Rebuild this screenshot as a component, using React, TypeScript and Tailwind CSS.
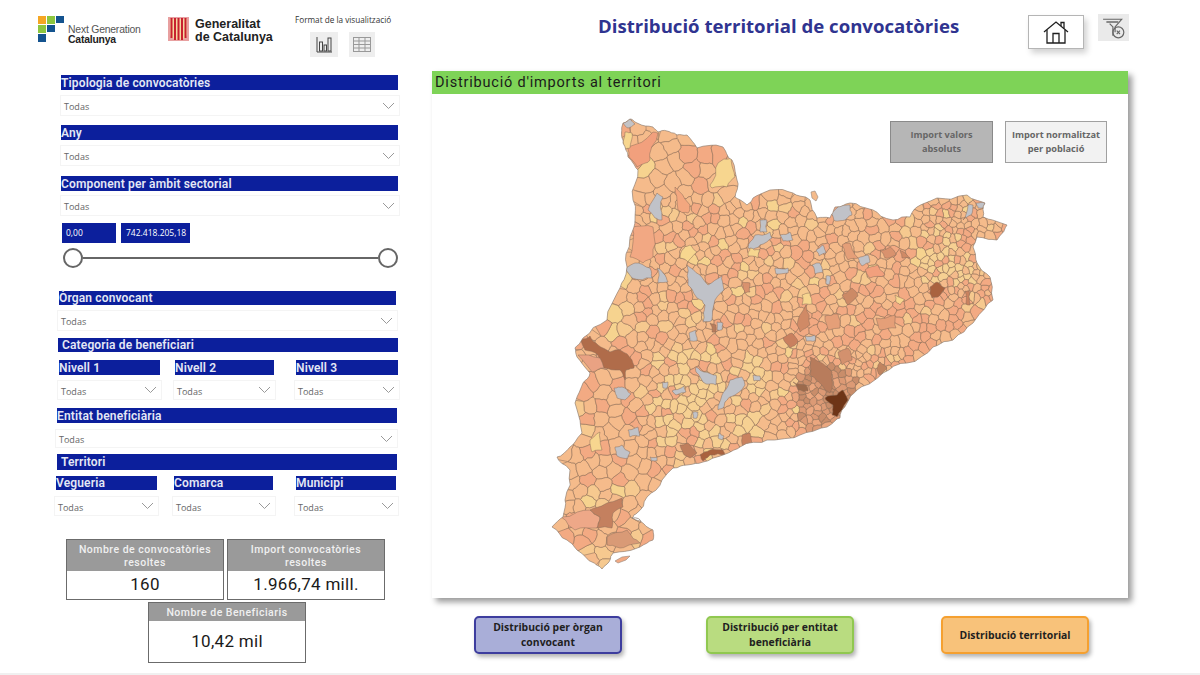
import { useMemo } from "react";

type P = [number, number];

const OUTLINE: P[] = [
  [623,123],[630,119],[637,123],[653,127],[658,132],[667,131],[677,135],[687,135],[697,148],[723,147],[732,160],[737,180],[735,197],[747,205],[753,198],[770,190],[793,193],[810,200],[817,218],[830,218],[835,207],[850,203],[873,210],[893,220],[910,217],[917,207],[937,198],[967,195],[985,203],[983,217],[1007,225],[997,240],[977,237],[973,247],[977,263],[990,277],[993,300],[973,323],[953,340],[933,347],[907,363],[883,373],[857,390],[847,403],[840,418],[827,427],[800,435],[767,440],[740,447],[723,455],[703,462],[687,465],[673,468],[662,480],[647,497],[637,513],[632,518],[640,521],[653,530],[653,540],[640,547],[613,553],[610,560],[602,569],[592,562],[577,550],[567,540],[552,527],[563,517],[565,500],[570,470],[557,457],[570,447],[582,433],[575,403],[583,383],[590,373],[577,357],[575,348],[583,338],[607,320],[620,288],[627,267],[630,237],[635,220],[633,200],[638,170],[628,157],[623,143],[622,138],
];

const OVERLAYS: { c: string; p: P[] }[] = [
  { c: "#f2a07d", p: [[628,147],[653,132],[658,133],[650,160],[637,167],[629,157]] },
  { c: "#f2a883", p: [[630,257],[632,227],[653,227],[653,257],[643,263]] },
  { c: "#f3a77f", p: [[675,187],[690,205],[688,213],[678,210]] },
  { c: "#f7d68f", p: [[710,185],[718,163],[732,158],[735,177],[727,187],[712,188]] },
  { c: "#f7d68f", p: [[625,132],[632,133],[630,148],[624,150]] },
  { c: "#c3c3c6", p: [[623,123],[630,119],[635,124],[628,128]] },
  { c: "#c0c2c8", p: [[648,210],[657,193],[663,197],[662,220],[655,218]] },
  { c: "#c0c2c8", p: [[830,213],[840,205],[850,205],[852,215],[845,220],[835,221]] },
  { c: "#c0c2c8", p: [[963,220],[968,205],[973,205],[971,215]] },
  { c: "#c0c2c8", p: [[976,203],[985,203],[984,208],[978,208]] },
  { c: "#c0c2c8", p: [[760,220],[767,220],[767,232],[760,232]] },
  { c: "#c0c2c8", p: [[748,248],[755,235],[770,232],[772,238],[760,245],[752,250]] },
  { c: "#c0c2c8", p: [[780,235],[790,232],[793,240],[783,241]] },
  { c: "#c0c2c8", p: [[816,250],[823,245],[826,253],[819,256]] },
  { c: "#c0c2c8", p: [[858,258],[868,255],[870,262],[862,266]] },
  { c: "#c0c2c8", p: [[626,268],[635,263],[650,268],[652,278],[632,278]] },
  { c: "#c0c2c8", p: [[657,268],[665,275],[668,282],[658,283]] },
  { c: "#c0c2c8", p: [[687,265],[700,275],[708,285],[722,276],[724,290],[715,300],[712,320],[703,322],[705,305],[697,298],[688,285]] },
  { c: "#c0c2c8", p: [[775,268],[788,268],[788,273],[776,274]] },
  { c: "#c0c2c8", p: [[812,265],[820,263],[823,272],[815,274]] },
  { c: "#c0c2c8", p: [[826,276],[830,276],[830,284],[826,284]] },
  { c: "#c0c2c8", p: [[689,333],[696,330],[697,341],[690,341]] },
  { c: "#c0c2c8", p: [[717,322],[723,323],[722,330],[717,330]] },
  { c: "#c0c2c8", p: [[805,336],[815,335],[815,341],[806,341]] },
  { c: "#c0c2c8", p: [[614,388],[622,387],[631,394],[625,400],[617,398]] },
  { c: "#c0c2c8", p: [[662,382],[668,382],[667,388],[663,388]] },
  { c: "#c0c2c8", p: [[672,391],[684,386],[686,392],[676,395]] },
  { c: "#c0c2c8", p: [[696,367],[704,372],[716,375],[716,385],[706,384],[696,372]] },
  { c: "#c0c2c8", p: [[718,410],[722,395],[730,380],[742,377],[745,385],[735,395],[725,402],[723,408]] },
  { c: "#c0c2c8", p: [[753,375],[760,376],[760,381],[754,381]] },
  { c: "#c0c2c8", p: [[628,430],[638,427],[640,436],[630,437]] },
  { c: "#c0c2c8", p: [[615,447],[622,445],[630,452],[628,458],[617,456]] },
  { c: "#c0c2c8", p: [[650,457],[657,457],[657,461],[651,461]] },
  { c: "#c0c2c8", p: [[693,412],[698,412],[697,418],[693,418]] },
  { c: "#c0c2c8", p: [[719,433],[724,436],[722,440],[718,438]] },
  { c: "#b06c4a", p: [[580,340],[590,336],[598,345],[610,352],[620,350],[632,360],[634,368],[626,370],[625,380],[620,370],[604,368],[598,355],[585,350]] },
  { c: "#e9a283", p: [[578,355],[600,358],[604,368],[592,372]] },
  { c: "#b87c5c", p: [[810,357],[820,362],[832,372],[830,393],[822,385],[810,375]] },
  { c: "#9c6a4c", p: [[793,382],[806,385],[808,391],[798,390]] },
  { c: "#6e3517", p: [[825,398],[837,395],[843,390],[848,400],[842,410],[837,417],[832,415],[833,405]] },
  { c: "#d3916e", p: [[838,352],[848,348],[852,360],[842,365]] },
  { c: "#c08460", p: [[877,368],[880,362],[887,368],[880,375]] },
  { c: "#a9623f", p: [[700,455],[710,450],[723,450],[725,455],[710,455],[703,461]] },
  { c: "#bf7e5c", p: [[680,445],[688,443],[697,453],[690,458],[683,453]] },
  { c: "#c9825f", p: [[742,435],[750,433],[753,445],[743,447]] },
  { c: "#eea888", p: [[561,517],[590,510],[600,517],[597,528],[575,530]] },
  { c: "#c4805f", p: [[590,510],[607,503],[622,498],[623,507],[613,513],[612,528],[597,528],[600,517]] },
  { c: "#d99a76", p: [[607,537],[627,530],[640,543],[620,548],[607,545]] },
  { c: "#a9623f", p: [[930,287],[937,282],[945,288],[938,297],[932,298]] },
  { c: "#c9825f", p: [[965,291],[969,291],[970,305],[966,304]] },
  { c: "#d9926e", p: [[880,250],[890,247],[896,255],[885,258]] },
  { c: "#cc8a66", p: [[842,295],[852,288],[858,296],[848,305]] },
  { c: "#c9805f", p: [[783,338],[792,333],[798,342],[790,348]] },
  { c: "#d08a66", p: [[797,325],[806,305],[810,325],[800,332]] },
  { c: "#e59f78", p: [[825,316],[838,314],[840,328],[828,330]] },
  { c: "#e59f78", p: [[876,318],[895,315],[896,328],[880,330]] },
  { c: "#b87c5c", p: [[710,323],[716,325],[716,332],[712,332]] },
  { c: "#d9926e", p: [[742,282],[750,283],[750,292],[745,293]] },
  { c: "#e59f78", p: [[842,245],[850,243],[858,258],[848,260]] },
  { c: "#f2a07d", p: [[865,270],[878,265],[885,275],[870,278]] },
  { c: "#d08a66", p: [[900,250],[905,253],[910,258],[902,258]] },
  { c: "#f7d68f", p: [[802,295],[810,293],[812,304],[802,305]] },
  { c: "#f7d68f", p: [[895,295],[905,300],[900,305],[896,302]] },
  { c: "#f7d68f", p: [[750,248],[760,250],[758,258],[748,256]] },
  { c: "#f7d68f", p: [[682,250],[690,245],[697,252],[688,262],[680,258]] },
  { c: "#f7d68f", p: [[590,440],[600,432],[602,450],[592,452]] },
];

const hash = (a: number, b: number, k: number) => {
  const v = Math.sin(a * 12.9898 + b * 78.233 + k * 37.719) * 43758.5453;
  return v - Math.floor(v);
};

function wobble(poly: P[], levels: number, amp: number): P[] {
  let cur = poly;
  for (let l = 0; l < levels; l++) {
    const out: P[] = [];
    for (let i = 0; i < cur.length; i++) {
      const p = cur[i];
      const q = cur[(i + 1) % cur.length];
      out.push(p);
      const len = Math.hypot(q[0] - p[0], q[1] - p[1]);
      if (len < 2) continue;
      const mx = (p[0] + q[0]) / 2;
      const my = (p[1] + q[1]) / 2;
      const ax = Math.round(mx * 2);
      const ay = Math.round(my * 2);
      out.push([mx + (hash(ax, ay, 1) - 0.5) * len * amp, my + (hash(ax, ay, 2) - 0.5) * len * amp]);
    }
    cur = out;
  }
  return cur;
}

function inPoly(x: number, y: number, poly: P[]) {
  let inside = false;
  for (let i = 0, j = poly.length - 1; i < poly.length; j = i++) {
    const [xi, yi] = poly[i];
    const [xj, yj] = poly[j];
    if (yi > y !== yj > y && x < ((xj - xi) * (y - yi)) / (yj - yi) + xi) inside = !inside;
  }
  return inside;
}

function buildCells() {
  let s = 20240611;
  const rnd = () => {
    s = (s * 1664525 + 1013904223) >>> 0;
    return s / 4294967296;
  };
  const seeds: P[] = [];
  const minD = (x: number, y: number) => {
    if (y < 200) return 12;
    if (x > 925 && y < 300) return 4.6;
    if (x > 790 && y > 350) return 4.8;
    if (y > 470) return 10;
    if (x < 640) return 10.5;
    return 7;
  };
  for (let t = 0; t < 24000; t++) {
    const x = 545 + rnd() * 470;
    const y = 112 + rnd() * 465;
    if (!inPoly(x, y, OUTLINE)) continue;
    const d = minD(x, y);
    if (seeds.some(([a, b]) => (a - x) ** 2 + (b - y) ** 2 < d * d)) continue;
    seeds.push([x, y]);
  }
  return seeds.map(([x, y], idx) => {
    let poly: P[] = [[x - 40, y - 40], [x + 40, y - 40], [x + 40, y + 40], [x - 40, y + 40]];
    for (let k = 0; k < seeds.length; k++) {
      if (k === idx) continue;
      const [a, b] = seeds[k];
      if (Math.abs(a - x) > 60 || Math.abs(b - y) > 60) continue;
      const mx = (a + x) / 2;
      const my = (b + y) / 2;
      const nx = a - x;
      const ny = b - y;
      const out: P[] = [];
      for (let i = 0; i < poly.length; i++) {
        const p = poly[i];
        const q = poly[(i + 1) % poly.length];
        const dp = (p[0] - mx) * nx + (p[1] - my) * ny;
        const dq = (q[0] - mx) * nx + (q[1] - my) * ny;
        if (dp <= 0) out.push(p);
        if (dp * dq < 0) {
          const r = dp / (dp - dq);
          out.push([p[0] + (q[0] - p[0]) * r, p[1] + (q[1] - p[1]) * r]);
        }
      }
      poly = out;
    }
    const r = rnd();
    const yellowish = (x > 650 && x < 760 && y > 350 && y < 450) || (x > 925 && x < 975 && y > 225 && y < 285);
    const orange = x > 800 && y > 290;
    const nearBcn = Math.hypot(x - 828, y - 398);
    let c = "#f5bb8b";
    if (nearBcn < 34) c = r < 0.35 ? "#c98d6a" : r < 0.7 ? "#dc9a75" : "#eba77f";
    else if (yellowish) c = r < 0.42 ? "#f6d092" : r < 0.85 ? "#f5bb8b" : "#f3aa83";
    else if (orange) c = r < 0.5 ? "#f3aa83" : r < 0.88 ? "#f5bb8b" : "#f6c98f";
    else c = r < 0.6 ? "#f5bb8b" : r < 0.84 ? "#f3aa83" : r < 0.95 ? "#f6c98f" : "#f6d38f";
    return { c, pts: toStr(wobble(poly, 2, 0.28)) };
  });
}

const toStr = (p: P[]) => p.map((q) => `${q[0].toFixed(1)},${q[1].toFixed(1)}`).join(" ");

function CataloniaMap() {
  const cells = useMemo(buildCells, []);
  const outline = useMemo(() => toStr(wobble(OUTLINE, 2, 0.22)), []);
  const overlays = useMemo(() => OVERLAYS.map((o) => ({ c: o.c, pts: toStr(wobble(o.p, 2, 0.22)) })), []);
  return (
    <svg viewBox="432 94 696 504" className="block w-[696px] h-[504px]">
      <defs>
        <clipPath id="cat">
          <polygon points={outline} />
        </clipPath>
      </defs>
      <g clipPath="url(#cat)" strokeLinejoin="round">
        <polygon points={outline} fill="#f5bb8b" />
        {cells.map((c, i) => (
          <polygon key={i} points={c.pts} fill={c.c} stroke="#8d6f5b" strokeWidth="0.55" />
        ))}
        {overlays.map((o, i) => (
          <polygon key={i} points={o.pts} fill={o.c} stroke="#8d6f5b" strokeWidth="0.5" />
        ))}
      </g>
      <polygon points={outline} fill="none" stroke="#93857a" strokeWidth="0.7" strokeLinejoin="round" />
      <polygon points="811,192 815,191 818,197 816,201 812,198" fill="#f5bb8b" stroke="#93857a" strokeWidth="0.6" />
      <polygon points="615,561 622,557 630,556 626,560 618,563" fill="#f3aa83" stroke="#93857a" strokeWidth="0.6" />
      <path d="M632 518 Q640 517 641 522" fill="none" stroke="#93857a" strokeWidth="0.8" />
    </svg>
  );
}

function Head({ children, className }: { children: React.ReactNode; className: string }) {
  return (
    <div className={`bg-[#0c1f9c] text-[#e4e8f5] font-['Roboto',sans-serif] font-semibold text-[12px] tracking-[0.15px] leading-none flex items-center whitespace-nowrap ${className}`}>
      {children}
    </div>
  );
}

function Drop({ className }: { className: string }) {
  return (
    <div className={`border border-[#f4f4f4] bg-white flex items-center justify-between pr-[4px] font-['Open_Sans',sans-serif] text-[9px] text-[#666666] ${className}`}>
      <span className="pl-[3px] pt-[3px]">Todas</span>
      <svg width="13" height="8" viewBox="0 0 13 8">
        <polyline points="1,1 6.5,6.5 12,1" fill="none" stroke="#999999" strokeWidth="1" />
      </svg>
    </div>
  );
}

function Kpi({ title, value, className, head, valueClass }: { title: React.ReactNode; value: string; className: string; head: string; valueClass: string }) {
  return (
    <div className={`border border-[#6b6b6b] flex flex-col bg-white shrink-0 ${className}`}>
      <div className={`bg-[#9a9a9a] text-[#f0f0f0] font-['Roboto',sans-serif] font-medium text-[10.5px] tracking-[0.5px] leading-[13px] text-center flex items-center justify-center ${head}`}>
        {title}
      </div>
      <div className={`flex-1 flex items-center justify-center text-[#1a1a1a] font-['Roboto',sans-serif] tracking-[0.3px] ${valueClass}`}>
        {value}
      </div>
    </div>
  );
}

function NavBtn({ children, className }: { children: React.ReactNode; className: string }) {
  return (
    <div className={`w-[148px] h-[38px] rounded-[5px] border-2 flex items-center justify-center text-center font-['Open_Sans',sans-serif] font-bold text-[10.4px] leading-[15px] text-[#1f1f1f] shadow-[2px_3px_4px_rgba(0,0,0,0.3)] ${className}`}>
      <span>{children}</span>
    </div>
  );
}

export default function App() {
  return (
    <div className="w-[1200px] h-[675px] overflow-hidden bg-white flex flex-col">
      <div className="flex h-[673px]">
        {/* left column */}
        <div className="w-[432px] shrink-0 flex flex-col">
          <div className="h-[75px] flex items-start">
            <svg width="27" height="26" viewBox="0 0 27 26" className="ml-[38px] mt-[16px] shrink-0">
              <rect x="0" y="0" width="8" height="8" fill="#f5a623" />
              <rect x="9" y="0" width="8" height="8" fill="#8cc63f" />
              <rect x="18" y="0" width="8" height="7" fill="#14538f" />
              <rect x="0" y="9" width="8" height="8" fill="#8cc63f" />
              <rect x="9" y="9" width="8" height="7" fill="#14538f" />
              <rect x="0" y="18" width="8" height="8" fill="#14538f" />
            </svg>
            <div className="ml-[3px] mt-[25px] w-[76px] shrink-0 font-['Liberation_Sans',sans-serif] text-[10.4px] leading-[10px] text-[#555555] whitespace-nowrap tracking-[-0.2px]">
              <div>Next Generation</div>
              <div className="font-bold text-[#222222]">Catalunya</div>
            </div>
            <svg width="21" height="24" viewBox="0 0 21 24" className="ml-[24px] mt-[17px] shrink-0">
              <rect x="0" y="0" width="21" height="24" fill="#e8a0a0" />
              <path d="M2 2h17v15q0 5-8.5 6Q2 22 2 17z" fill="#f5d7a0" />
              <path d="M3.500 1v20M7 1v22M10.500 1v22M14 1v22M17.500 1v20" stroke="#c8202f" strokeWidth="2" fill="none" />
            </svg>
            <div className="ml-[6px] mt-[18px] w-[84px] shrink-0 font-['Liberation_Sans',sans-serif] font-bold text-[12.5px] leading-[13px] text-[#222222] whitespace-nowrap">
              <div>Generalitat</div>
              <div>de Catalunya</div>
            </div>
            <div className="ml-[16px] mt-[14px] w-[96px] shrink-0 flex flex-col">
              <div className="font-['Open_Sans',sans-serif] font-medium text-[8.2px] leading-[11px] text-[#333333] whitespace-nowrap">Format de la visualització</div>
              <div className="flex mt-[7px] ml-[15px] gap-[11px]">
                <div className="w-[28px] h-[25px] bg-[#eeeeee] flex items-center justify-center">
                  <svg width="17" height="17" viewBox="0 0 17 17" fill="none" stroke="#444444" strokeWidth="1">
                    <path d="M1 1v15h15" />
                    <rect x="3.500" y="6" width="3" height="9" />
                    <rect x="8" y="9" width="2.500" height="6" />
                    <rect x="12" y="2" width="3" height="13" />
                  </svg>
                </div>
                <div className="w-[26px] h-[25px] bg-[#eeeeee] flex items-center justify-center">
                  <svg width="18" height="15" viewBox="0 0 18 15" fill="none" stroke="#999999" strokeWidth="1">
                    <rect x="0.500" y="0.500" width="17" height="14" />
                    <path d="M0.500 4h17M0.500 7.500h17M0.500 11h17M6 0.500v14M12 0.500v14" />
                  </svg>
                </div>
              </div>
            </div>
          </div>

          <Head className="ml-[61px] w-[337px] h-[15px]">Tipologia de convocatòries</Head>
          <Drop className="ml-[60px] w-[340px] h-[21px] mt-[5px]" />
          <Head className="ml-[61px] w-[337px] h-[15px] mt-[9px]">Any</Head>
          <Drop className="ml-[60px] w-[340px] h-[21px] mt-[5px]" />
          <Head className="ml-[61px] w-[337px] h-[15px] mt-[10px]">Component per àmbit sectorial</Head>
          <Drop className="ml-[60px] w-[340px] h-[21px] mt-[4px]" />
          <div className="ml-[62px] mt-[7px] flex gap-[5px] font-['Open_Sans',sans-serif] text-[8.5px] text-white h-[20px]">
            <div className="w-[54px] bg-[#0c1f9c] flex items-center pl-[4px]">0,00</div>
            <div className="w-[69px] bg-[#0c1f9c] flex items-center pl-[5px]">742.418.205,18</div>
          </div>
          <div className="ml-[63px] w-[335px] h-[20px] mt-[5px] flex items-center">
            <div className="w-[20px] h-[20px] rounded-full border-2 border-[#666666] bg-white shrink-0" />
            <div className="flex-1 h-[2px] bg-[#666666]" />
            <div className="w-[20px] h-[20px] rounded-full border-2 border-[#666666] bg-white shrink-0" />
          </div>

          <Head className="ml-[59px] w-[337px] h-[14px] mt-[23px]">Òrgan convocant</Head>
          <Drop className="ml-[57px] w-[341px] h-[21px] mt-[5px]" />
          <Head className="ml-[58px] w-[340px] h-[14px] mt-[7px] pl-[4px]">Categoria de beneficiari</Head>
          <div className="ml-[59px] mt-[8px] w-[339px] flex h-[15px]">
            <Head className="w-[101px] h-[15px]">Nivell 1</Head>
            <Head className="w-[99px] h-[15px] ml-[15px]">Nivell 2</Head>
            <Head className="w-[102px] h-[15px] ml-[22px]">Nivell 3</Head>
          </div>
          <div className="ml-[57px] mt-[5px] flex h-[20px]">
            <Drop className="w-[105px] h-[20px]" />
            <Drop className="w-[103px] h-[20px] ml-[11px]" />
            <Drop className="w-[106px] h-[20px] ml-[18px]" />
          </div>
          <Head className="ml-[57px] w-[340px] h-[15px] mt-[8px]">Entitat beneficiària</Head>
          <Drop className="ml-[55px] w-[343px] h-[19px] mt-[6px]" />
          <Head className="ml-[57px] w-[340px] h-[16px] mt-[6px] pl-[4px]">Territori</Head>
          <div className="ml-[56px] mt-[6px] w-[340px] flex h-[14px]">
            <Head className="w-[101px] h-[14px]">Vegueria</Head>
            <Head className="w-[99px] h-[14px] ml-[17px]">Comarca</Head>
            <Head className="w-[100px] h-[14px] ml-[23px]">Municipi</Head>
          </div>
          <div className="ml-[54px] mt-[6px] flex h-[20px]">
            <Drop className="w-[105px] h-[20px]" />
            <Drop className="w-[104px] h-[20px] ml-[13px]" />
            <Drop className="w-[105px] h-[20px] ml-[18px]" />
          </div>

          <div className="ml-[66px] mt-[23px] flex gap-[3px]">
            <Kpi className="w-[158px] h-[61px]" head="h-[31px]" valueClass="text-[17px]" title={<span>Nombre de convocatòries<br />resoltes</span>} value="160" />
            <Kpi className="w-[158px] h-[61px]" head="h-[31px]" valueClass="text-[17px]" title={<span>Import convocatòries<br />resoltes</span>} value="1.966,74 mill." />
          </div>
          <Kpi className="ml-[148px] mt-[2px] w-[158px] h-[61px]" head="h-[18px]" valueClass="text-[17px]" title="Nombre de Beneficiaris" value="10,42 mil" />
        </div>

        {/* right column */}
        <div className="w-[696px] shrink-0 flex flex-col">
          <div className="h-[71px] flex items-start relative">
            <div className="mt-[12px] ml-[166px] font-['Open_Sans',sans-serif] font-bold text-[18.6px] leading-[28px] text-[#2f3490] whitespace-nowrap">
              Distribució territorial de convocatòries
            </div>
            <div className="absolute left-[596px] top-[15px] w-[56px] h-[34px] border border-[#b5b5b5] bg-white shadow-[3px_4px_6px_rgba(0,0,0,0.18)] flex items-center justify-center">
              <svg width="26" height="24" viewBox="0 0 26 24" fill="none" stroke="#1f1f1f" strokeWidth="1.300">
                <path d="M1 12 L13 2 L25 12" />
                <path d="M18 6 V2.500 H21 V8.500" />
                <path d="M4 10 V23 H22 V10" />
                <path d="M10 23 V13.500 H16 V23" />
              </svg>
            </div>
            <div className="absolute left-[666px] top-[14px] w-[31px] h-[27px] bg-[#eaeaea] flex items-center justify-center">
              <svg width="24" height="24" viewBox="0 0 22 22" fill="none" stroke="#666666" strokeWidth="1.100">
                <path d="M1 3 H18 L12 10 V15" />
                <path d="M4 5.500 H15" stroke="#888888" strokeWidth="1.800" />
                <path d="M7 7 L10 10 V18" />
                <circle cx="15" cy="15" r="5" />
                <path d="M13.500 13.500 L16.500 16.500 M16.500 13.500 L13.500 16.500" strokeWidth="1" />
              </svg>
            </div>
          </div>

          <div className="relative w-[696px] h-[527px] bg-white shadow-[4px_4px_6px_rgba(0,0,0,0.4)]">
            <div className="h-[23px] bg-[#7ed357] flex items-center pl-[3px] font-['Roboto',sans-serif] font-normal text-[14.5px] tracking-[0.8px] text-[#1a1a1a] whitespace-nowrap">
              Distribució d'imports al territori
            </div>
            <CataloniaMap />
            <div className="absolute left-[458px] top-[50px] w-[103px] h-[42px] border border-[#8a8a8a] bg-[#b6b6b6] flex items-center justify-center text-center font-['Open_Sans',sans-serif] font-bold text-[9.2px] leading-[14px] text-[#666666]">
              <span>Import valors<br />absoluts</span>
            </div>
            <div className="absolute left-[573px] top-[50px] w-[102px] h-[42px] border border-[#a0a0a0] bg-[#f2f2f2] flex items-center justify-center text-center font-['Open_Sans',sans-serif] font-bold text-[9.2px] leading-[14px] text-[#666666]">
              <span>Import normalitzat<br />per població</span>
            </div>
          </div>

          <div className="flex mt-[18px] ml-[42px]">
            <NavBtn className="bg-[#a9aed8] border-[#3d3d9e]">Distribució per òrgan<br />convocant</NavBtn>
            <NavBtn className="bg-[#b9dc80] border-[#90c850] ml-[84px]">Distribució per entitat<br />beneficiària</NavBtn>
            <NavBtn className="bg-[#f8c27a] border-[#f5a030] ml-[87px]">Distribució territorial</NavBtn>
          </div>
        </div>
      </div>
      <div className="h-[2px] bg-[#f0f0f0]" />
    </div>
  );
}
